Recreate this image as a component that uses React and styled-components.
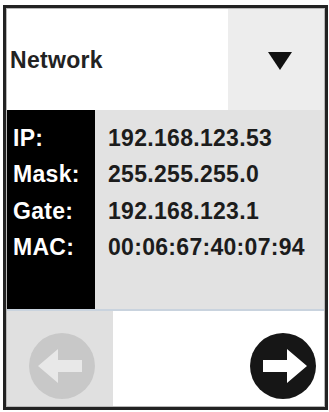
import React from 'react'
import styled, { createGlobalStyle } from 'styled-components'

const GlobalStyle = createGlobalStyle`
  html, body {
    margin: 0;
    padding: 0;
    background: #ffffff;
  }
  body {
    font-family: "Liberation Sans", Arial, sans-serif;
  }
`

const rows = [
  { label: 'IP:', value: '192.168.123.53' },
  { label: 'Mask:', value: '255.255.255.0' },
  { label: 'Gate:', value: '192.168.123.1' },
  { label: 'MAC:', value: '00:06:67:40:07:94' },
]

const ArrowButton = ({ dir, disc, arrow }) => (
  <svg width="66" height="66" viewBox="0 0 66 66">
    <circle cx="33" cy="33" r="33" fill={disc} />
    <g transform={dir === 'left' ? 'translate(66 0) scale(-1 1)' : undefined}>
      <path d="M13 27 H37 V16 L57 33 L37 50 V39 H13 Z" fill={arrow} />
    </g>
  </svg>
)

const App = () => {
  return (
    <>
      <GlobalStyle />
      <Frame>
        <Header>
          <SelectText>Network</SelectText>
          <DropButton>
            <Triangle />
          </DropButton>
        </Header>
        <Info>
          <Labels>
            {rows.map((r) => (
              <Line key={r.label}>{r.label}</Line>
            ))}
          </Labels>
          <Values>
            {rows.map((r) => (
              <Line key={r.label} $dark>{r.value}</Line>
            ))}
          </Values>
        </Info>
        <Footer>
          <NavButton $bg="#e0e0e0" $width="106px">
            <ArrowButton dir="left" disc="#c8c8c8" arrow="#e8e8e8" />
          </NavButton>
          <NavButton $bg="#ffffff" $width="auto" $right>
            <ArrowButton dir="right" disc="#161616" arrow="#ffffff" />
          </NavButton>
        </Footer>
      </Frame>
    </>
  )
}

const Frame = styled.div`
  margin: 5px 0 0 3px;
  width: 325px;
  height: 405px;
  box-sizing: border-box;
  border: 3px solid #222222;
  padding: 1px;
  background: #b8b8b8;
  display: flex;
  flex-direction: column;
`

const Header = styled.div`
  display: flex;
  height: 101px;
  background: #ffffff;
`

const SelectText = styled.div`
  flex: 1;
  display: flex;
  align-items: center;
  padding: 2px 0 0 3px;
  font-size: 23px;
  font-weight: 700;
  color: #222222;
  letter-spacing: 0.3px;
`

const DropButton = styled.div`
  width: 96px;
  background: #ededed;
  display: flex;
  align-items: center;
  justify-content: center;
  padding-left: 8px;
  padding-top: 2px;
  box-sizing: border-box;
`

const Triangle = styled.div`
  width: 0;
  height: 0;
  border-left: 12px solid transparent;
  border-right: 12px solid transparent;
  border-top: 18px solid #111111;
`

const Info = styled.div`
  display: flex;
  height: 199px;
  border-bottom: 2px solid #c9d3de;
`

const Labels = styled.div`
  width: 88px;
  background: #000000;
  color: #ffffff;
  padding: 10px 0 0 6px;
  box-sizing: border-box;
`

const Values = styled.div`
  flex: 1;
  background: #e2e2e2;
  padding: 10px 0 0 13px;
`

const Line = styled.div`
  height: 36.3px;
  line-height: 36px;
  font-size: 23px;
  font-weight: 700;
  letter-spacing: 0.3px;
  color: ${(p) => (p.$dark ? '#1c1c1c' : '#ffffff')};
`

const Footer = styled.div`
  flex: 1;
  display: flex;
  background: #ffffff;
`

const NavButton = styled.div`
  width: ${(p) => p.$width};
  flex: ${(p) => (p.$right ? 1 : 'none')};
  background: ${(p) => p.$bg};
  display: flex;
  align-items: flex-start;
  justify-content: ${(p) => (p.$right ? 'flex-end' : 'center')};
  padding-top: 22px;
  padding-right: ${(p) => (p.$right ? '8px' : '0')};
  padding-left: ${(p) => (p.$right ? '0' : '4px')};
  box-sizing: border-box;
`

export default App
